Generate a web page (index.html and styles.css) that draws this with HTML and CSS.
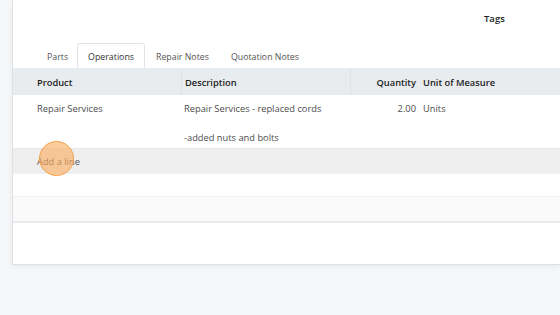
FILE: index.html
```html
<!DOCTYPE html>
<html>
<head>
<meta charset="utf-8">
<link rel="stylesheet" href="styles.css">
</head>
<body>
<div class="page">
  <div class="card">
    <div class="top">
      <span class="tags">Tags</span>
    </div>
    <div class="tabs">
      <span class="tab">Parts</span>
      <span class="tab active">Operations</span>
      <span class="tab">Repair Notes</span>
      <span class="tab">Quotation Notes</span>
    </div>
    <div class="table">
      <div class="row head">
        <div class="c c1">Product</div>
        <div class="c c2">Description</div>
        <div class="c c3">Quantity</div>
        <div class="c c4">Unit of Measure</div>
      </div>
      <div class="row data">
        <div class="c c1">Repair Services</div>
        <div class="c c2 multi"><span>Repair Services - replaced cords</span><span>-added nuts and bolts</span></div>
        <div class="c c3">2.00</div>
        <div class="c c4">Units</div>
      </div>
      <div class="row add">
        <div class="c c1"><span class="addlink">Add a line</span><span class="dot"></span></div>
      </div>
      <div class="row empty1"></div>
      <div class="row empty2"></div>
    </div>
  </div>
</div>
</body>
</html>
```
FILE: styles.css
```css
* { box-sizing: border-box; }
html, body { margin: 0; padding: 0; }
body {
  background: #f6f7f9;
  font-family: "Open Sans", "Noto Sans", sans-serif;
  font-size: 9.3px;
  color: #4c4c4c;
  width: 560px;
  height: 315px;
  overflow: hidden;
}
.page { padding-left: 12px; }
.card {
  width: 548px;
  height: 265px;
  background: #fff;
  border-left: 1px solid #dfe1e4;
  border-bottom: 1px solid #dfe1e4;
  box-shadow: 0 2px 6px rgba(0,0,0,0.06);
}
.top {
  height: 43px;
  padding-left: 471px;
  padding-top: 12px;
}
.tags { font-weight: 600; color: #222; font-size: 9.5px; }
.tabs {
  display: flex;
  height: 25px;
  padding-left: 23px;
  align-items: stretch;
  font-size: 8.8px;
}
.tab {
  padding: 0 10px;
  display: flex;
  align-items: center;
  padding-top: 1px;
  color: #555;
  border: 1px solid transparent;
  border-bottom: 0;
  border-radius: 3px 3px 0 0;
}
.tab:first-child { padding-right: 8px; }
.tab.active {
  border-color: #e2e4e7;
  color: #333;
}
.table { display: flex; flex-direction: column; }
.row { display: flex; }
.c { padding: 0; }
.c1 { width: 168px; padding-left: 24px; }
.c2 { width: 169px; padding-left: 3px; }
.c3 { width: 69px; text-align: right; padding-right: 3px; }
.c4 { padding-left: 4px; }
.head {
  height: 27px;
  background: #e9ecef;
  font-weight: 600;
  color: #222;
  align-items: center;
  padding-top: 1px;
}
.head .c2, .head .c3 { border-left: 1px solid #dee1e5; height: 100%; display: flex; align-items: center; }
.head .c3 { justify-content: flex-end; }
.data { height: 53px; padding-top: 7px; }
.multi { display: flex; flex-direction: column; gap: 16px; }
.add {
  height: 25px;
  background: #efefef;
  border-top: 1px solid #e8e8e8;
  align-items: center;
}
.add .c1 { position: relative; }
.addlink { color: #555; }
.dot {
  position: absolute;
  left: 26px;
  top: -14px;
  width: 35px;
  height: 35px;
  border-radius: 50%;
  background: rgba(251, 170, 90, 0.6);
  border: 1px solid #f6a24c;
}
.empty1 { height: 23px; border-top: 1px solid #f2f2f2; }
.empty2 { height: 27px; background: #fafafa; border-top: 1px solid #f0f0f0; border-bottom: 2px solid #e9ebee; }
```
